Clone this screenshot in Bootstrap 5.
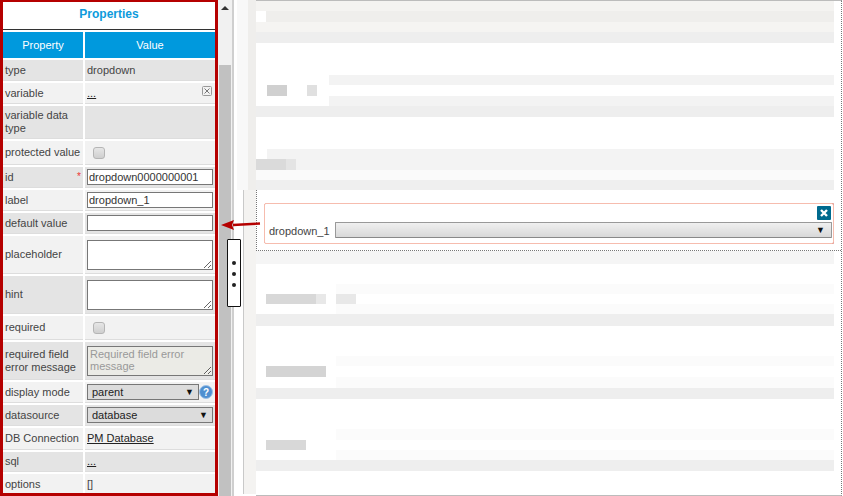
<!DOCTYPE html>
<html lang="en">
<head>
<meta charset="UTF-8">
<title>Form Designer</title>
<link rel="stylesheet" href="https://cdn.jsdelivr.net/npm/bootstrap@5.3.0/dist/css/bootstrap.min.css">
<style>
html, body { margin: 0; height: 496px; overflow: hidden; background: #fff; }
body { font-family: "Liberation Sans", Arial, sans-serif; font-size: 11px; line-height: 13px; color: #444; }
.shell { width: 843px; height: 496px; }

/* properties panel */
.props { width: 218px; height: 496px; flex: none; border: 3px solid #b50000; border-top-width: 2px; background: #fff; overflow: hidden; }
.props-title { height: 28px; color: #0d9bdc; font-size: 12px; font-weight: 700; text-align: center; line-height: 25px; border-bottom: 1px solid #333; }
.props-grid { display: grid; grid-template-columns: 80px 130px; column-gap: 2px; margin-top: 2px;
  grid-template-rows: 26px 21px 21px 33px 24px 21px 21px 21px 38px 38px 24px 38px 21px 21px 22px 20px 21px; row-gap: 2px; }
.cell { padding: 0 2px; display: flex; align-items: center; position: relative; border-bottom: 1px solid #ddd; }
.val { padding: 0 2px; }
.odd { background: #e4e4e4; }
.even { background: #f2f2f2; }
.head { background: #0099dd; color: #fff; justify-content: center; border: 0; font-size: 11px; }
.tinput { width: 100%; height: 16px; border: 1px solid #777; background: #fff; font-size: 11px; color: #333; padding: 0 1px; display: block; line-height: 14px; }
.tarea { width: 100%; height: 30px; border: 1px solid #777; background: #fff; font: 11px/12px "Liberation Sans", Arial, sans-serif; padding: 1px 2px; display: block; resize: both; }
.tarea.off { background: #ebebe6; color: #999; }
.tarea.off::placeholder { color: #999; opacity: 1; }
.cbox { width: 12px; height: 12px; border: 1px solid #b5b5b5; border-radius: 3px; background: linear-gradient(#e6e6e6, #cfcfcf); margin-left: 6px; }
.fakesel { height: 16px; border: 1px solid #777; background: #dcdcdc; color: #222; padding: 0 4px; flex: 1 1 auto; line-height: 14px; }
.caret-mark { font-size: 9px; color: #111; }
.plink { color: #222; text-decoration: underline; }
.req-star { position: absolute; right: 2px; top: 3px; color: #e33; font-size: 10px; }

/* scrollbar */
.sbar { width: 14px; flex: none; background: #f1f1f1; }
.sbar-arrow { height: 65px; padding-top: 6px; }
.sbar-arrow i { display: block; width: 0; height: 0; margin-left: 3px; border: 4px solid transparent; border-top: 0; border-bottom-color: #333; }
.sbar-thumb { background: #c1c1c1; height: 431px; margin: 0 1px 0 1px; }

/* canvas */
.gutter { width: 24px; flex: none; border-left: 2px solid #cfcfcf; }
.gut-a { height: 190px; background: linear-gradient(90deg, #fff 3px, #f8f8f8 3px, #f8f8f8 14px, #efeeec 14px); }
.gut-b { height: 304px; background: linear-gradient(90deg, #fff 9px, #c9c9c9 9px, #c9c9c9 10px, #f4f3f1 10px); }
.stage { flex: 1 1 auto; border-top: 1px solid #bcbcbc; border-bottom: 1px solid #bcbcbc; border-right: 1px dotted #777; margin-right: 1px; height: 496px; }
.strip { margin-right: 7px; }
.blob-row { display: flex; height: 100%; }
.blob { flex: none; height: 100%; }
.dz { border-left: 1px dotted #777; border-bottom: 1px dotted #777; height: 61px; padding: 13px 0 0 7px; margin-right: 0; }
.field-box { height: 41px; margin-right: 7px; border: 1px dashed #a81818; outline: 1px solid #f6bcae; outline-offset: -1px; border-radius: 2px; position: relative; display: flex; align-items: flex-end; padding: 0 1px 5px 4px; gap: 5px; }
.fld-select { flex: 1 1 auto; height: 16px; border: 1px solid #999; border-bottom-color: #888; background: linear-gradient(#f0f0f0, #d8d8d8); border-radius: 1px; text-align: right; padding-right: 6px; line-height: 12px; }
.fld-close { position: absolute; right: 2px; top: 2px; width: 14px; height: 14px; background: #006a8e; border-radius: 1px; display: block; }

/* overlay */
.pull-arrow { position: absolute; left: 220px; top: 218px; }
.handle { position: absolute; left: 227px; top: 239px; width: 14px; height: 68px; background: #fff; border: 1px solid #111; border-radius: 1px; display: flex; flex-direction: column; align-items: center; justify-content: center; gap: 7px; padding-top: 1px; }
.handle span { width: 4px; height: 4px; border-radius: 50%; background: #222; }
</style>
</head>
<body>
<div class="shell d-flex position-relative">

  <div class="props">
    <div class="props-title">Properties</div>
    <div class="props-grid">
      <div class="cell head">Property</div><div class="cell head">Value</div>

      <div class="cell odd">type</div>
      <div class="cell odd val align-items-start pt-1">dropdown</div>

      <div class="cell even">variable</div>
      <div class="cell even val"><span class="plink">...</span>
        <svg class="position-absolute" style="right:3px;top:3px" width="10" height="10" viewBox="0 0 10 10"><rect x=".5" y=".5" width="9" height="9" rx="1" fill="#f2f2f2" stroke="#999"/><path d="M2.5 2.5l5 5M7.5 2.5l-5 5" stroke="#777" fill="none"/></svg>
      </div>

      <div class="cell odd">variable data type</div>
      <div class="cell odd val"></div>

      <div class="cell even text-nowrap">protected value</div>
      <div class="cell even val"><span class="cbox"></span></div>

      <div class="cell odd">id<span class="req-star">*</span></div>
      <div class="cell odd val"><input class="tinput" value="dropdown0000000001"></div>

      <div class="cell even">label</div>
      <div class="cell even val"><input class="tinput" value="dropdown_1"></div>

      <div class="cell odd">default value</div>
      <div class="cell odd val"><input class="tinput"></div>

      <div class="cell even">placeholder</div>
      <div class="cell even val"><textarea class="tarea"></textarea></div>

      <div class="cell odd">hint</div>
      <div class="cell odd val"><textarea class="tarea"></textarea></div>

      <div class="cell even">required</div>
      <div class="cell even val"><span class="cbox"></span></div>

      <div class="cell odd">required field error message</div>
      <div class="cell odd val"><textarea class="tarea off" placeholder="Required field error message" disabled></textarea></div>

      <div class="cell even">display mode</div>
      <div class="cell even val gap-0">
        <div class="fakesel d-flex justify-content-between align-items-center"><span>parent</span><span class="caret-mark">&#9660;</span></div>
        <svg class="flex-none" width="14" height="14" viewBox="0 0 14 14"><circle cx="7" cy="7" r="6.5" fill="#4f8fd0" stroke="#9cc0e6"/><text x="7" y="10.5" font-size="10" font-weight="700" text-anchor="middle" fill="#fff" font-family="Liberation Sans">?</text></svg>
      </div>

      <div class="cell odd">datasource</div>
      <div class="cell odd val"><div class="fakesel d-flex justify-content-between align-items-center"><span>database</span><span class="caret-mark">&#9660;</span></div></div>

      <div class="cell even">DB Connection</div>
      <div class="cell even val"><span class="plink">PM Database</span></div>

      <div class="cell odd">sql</div>
      <div class="cell odd val"><span class="plink">...</span></div>

      <div class="cell even">options</div>
      <div class="cell even val">[]</div>
    </div>
  </div>

  <div class="sbar">
    <div class="sbar-arrow"><i></i></div>
    <div class="sbar-thumb"></div>
  </div>

  <div class="gutter">
    <div class="gut-a"></div>
    <div class="gut-b"></div>
  </div>

  <div class="stage" id="stage"></div>

  <svg class="pull-arrow" width="42" height="14" viewBox="0 0 42 14"><path d="M40 5.5L13 7" stroke="#b50000" stroke-width="2.4" fill="none"/><path d="M1 7l13-5-2 5 2 5z" fill="#b50000"/></svg>
  <div class="handle"><span></span><span></span><span></span></div>
</div>

<script>
  // blurred-out widgets on the canvas: [height, colour, leftInset, blobs]
  const strips = [
    [10, '#f4f3f1', 0], [11, '#efeeec', 10], [10, '#f5f4f2', 0], [11, '#eeeeee', 0],
    [32, '#fff', 0],
    [10, '#f3f3f3', 73], [11, '#fff', 73, [[11, 20, '#d0d0d0'], [20, 10, '#e0e0e0']]], [10, '#f3f3f3', 73], [11, '#eeeeee', 0],
    [32, '#fff', 0],
    [10, '#f3f3f3', 11], [11, '#f3f3f3', 11, [[0, 30, '#dadada'], [0, 10, '#e4e4e4']]], [10, '#fafafa', 0], [10, '#efefef', 0],
    'field',
    [13, '#f5f5f5', 0], [20, '#fff', 0],
    [10, '#fbfbfb', 80], [10, '#fff', 80, [[10, 50, '#d8d8d8'], [0, 10, '#e8e8e8'], [10, 20, '#e8e8e8']]], [10, '#fbfbfb', 80], [12, '#eeeeee', 0],
    [30, '#fff', 0],
    [10, '#fbfbfb', 80], [11, '#fff', 80, [[10, 60, '#d4d4d4']]], [11, '#fbfbfb', 80], [11, '#eeeeee', 0],
    [30, '#fff', 0],
    [11, '#fbfbfb', 80], [10, '#fff', 80, [[10, 40, '#d8d8d8']]], [10, '#fbfbfb', 80], [11, '#eeeeee', 0]
  ];
  const stage = document.getElementById('stage');
  strips.forEach((s) => {
    if (s === 'field') {
      stage.insertAdjacentHTML('beforeend', `
        <div class="dz">
          <div class="field-box">
            <a class="fld-close"><svg width="14" height="14" viewBox="0 0 14 14"><path d="M4 4l6 6M10 4l-6 6" stroke="#fff" stroke-width="2.4" fill="none"/></svg></a>
            <span class="text-nowrap mb-0">dropdown_1</span>
            <div class="fld-select"><span class="caret-mark">&#9660;</span></div>
          </div>
        </div>`);
      return;
    }
    const [h, colour, inset, blobs] = s;
    const row = document.createElement('div');
    row.className = 'strip';
    row.style.height = h + 'px';
    row.style.background = `linear-gradient(90deg, #fff ${inset}px, ${colour} ${inset}px)`;
    if (blobs) {
      const inner = document.createElement('div');
      inner.className = 'blob-row';
      blobs.forEach(([ml, w, c]) => {
        const b = document.createElement('div');
        b.className = 'blob';
        b.style.marginLeft = ml + 'px';
        b.style.width = w + 'px';
        b.style.background = c;
        inner.appendChild(b);
      });
      row.appendChild(inner);
    }
    stage.appendChild(row);
  });
</script>
</body>
</html>
